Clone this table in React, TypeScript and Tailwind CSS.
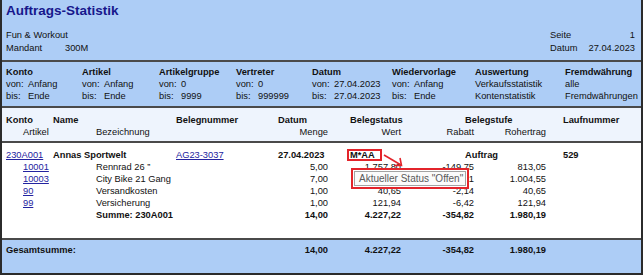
import React from "react";

const BLUE = "bg-[#adcdf6]";

function Sep() {
  return <div className="h-[2px] shrink-0 bg-[#4a4a4a]" />;
}

function FilterCol({ w, title, von, bis, plain }: { w: string; title: string; von: string; bis: string; plain?: boolean }) {
  return (
    <div className={w + " shrink-0"}>
      <div className="font-bold">{title}</div>
      {plain ? (
        <>
          <div>{von}</div>
          <div>{bis}</div>
        </>
      ) : (
        <>
          <div className="flex">
            <span className="w-[22px] shrink-0">von:</span>
            <span>{von}</span>
          </div>
          <div className="flex">
            <span className="w-[22px] shrink-0">bis:</span>
            <span>{bis}</span>
          </div>
        </>
      )}
    </div>
  );
}

function L({ children }: { children: React.ReactNode }) {
  return <span className="text-[#2323a0] underline">{children}</span>;
}

function ItemRow({ art, bez, menge, wert, rabatt, roh }: { art: string; bez: string; menge: string; wert: string; rabatt: string; roh: string }) {
  return (
    <div className="flex h-[12px]">
      <span className="w-[17px] shrink-0" />
      <span className="w-[73px] shrink-0">
        <L>{art}</L>
      </span>
      <span className="w-[182px] shrink-0">{bez}</span>
      <span className="w-[50px] shrink-0 text-right">{menge}</span>
      <span className="w-[73px] shrink-0 text-right">{wert}</span>
      <span className="w-[73px] shrink-0 text-right">{rabatt}</span>
      <span className="w-[72px] shrink-0 text-right">{roh}</span>
    </div>
  );
}

export default function App() {
  return (
    <div className="relative flex h-[275px] w-[643px] flex-col overflow-hidden border-x-2 border-b-2 border-[#2b2b2b] bg-white font-['Liberation_Sans',Arial,sans-serif] text-[9.3px] leading-[12px] text-[#111]">
      {/* Header */}
      <div className={"h-[60px] shrink-0 pl-[4px] pr-[6px] pt-[3px] " + BLUE}>
        <div className="text-[13.5px] font-bold leading-[16px] text-[#17178c]">Auftrags-Statistik</div>
        <div className="mt-[10px] flex justify-between leading-[13px]">
          <div>
            <div>Fun &amp; Workout</div>
            <div className="flex">
              <span className="w-[59px]">Mandant</span>
              <span>300M</span>
            </div>
          </div>
          <div className="w-[85px]">
            <div className="flex justify-between">
              <span>Seite</span>
              <span>1</span>
            </div>
            <div className="flex justify-between">
              <span>Datum</span>
              <span>27.04.2023</span>
            </div>
          </div>
        </div>
      </div>
      <Sep />
      {/* Filter */}
      <div className={"flex h-[44px] shrink-0 pl-[4px] pt-[4px] " + BLUE}>
        <FilterCol w="w-[76px]" title="Konto" von="Anfang" bis="Ende" />
        <FilterCol w="w-[77px]" title="Artikel" von="Anfang" bis="Ende" />
        <FilterCol w="w-[77px]" title="Artikelgruppe" von="0" bis="9999" />
        <FilterCol w="w-[76px]" title="Vertreter" von="0" bis="999999" />
        <FilterCol w="w-[80px]" title="Datum" von="27.04.2023" bis="27.04.2023" />
        <FilterCol w="w-[83px]" title="Wiedervorlage" von="Anfang" bis="Ende" />
        <FilterCol w="w-[90px]" title="Auswertung" von="Verkaufsstatistik" bis="Kontenstatistik" plain />
        <FilterCol w="w-[74px]" title="Fremdwährung" von="alle" bis="Fremdwährungen" plain />
      </div>
      <Sep />
      {/* Column header */}
      <div className="h-[33px] shrink-0 bg-[#eef4fd] pl-[4px] pt-[6px]">
        <div className="flex font-bold">
          <span className="w-[47px] shrink-0">Konto</span>
          <span className="w-[123px] shrink-0">Name</span>
          <span className="w-[102px] shrink-0">Belegnummer</span>
          <span className="w-[72px] shrink-0">Datum</span>
          <span className="w-[115px] shrink-0">Belegstatus</span>
          <span className="w-[98px] shrink-0">Belegstufe</span>
          <span>Laufnummer</span>
        </div>
        <div className="flex">
          <span className="w-[17px] shrink-0" />
          <span className="w-[73px] shrink-0">Artikel</span>
          <span className="w-[182px] shrink-0">Bezeichnung</span>
          <span className="w-[50px] shrink-0 text-right">Menge</span>
          <span className="w-[73px] shrink-0 text-right">Wert</span>
          <span className="w-[73px] shrink-0 text-right">Rabatt</span>
          <span className="w-[72px] shrink-0 text-right">Rohertrag</span>
        </div>
      </div>
      <Sep />
      {/* Data */}
      <div className="h-[95px] shrink-0 bg-white pl-[4px] pt-[6px]">
        <div className="flex h-[12px]">
          <span className="w-[47px] shrink-0">
            <L>230A001</L>
          </span>
          <span className="w-[123px] shrink-0 font-bold">Annas Sportwelt</span>
          <span className="w-[102px] shrink-0">
            <L>AG23-3037</L>
          </span>
          <span className="w-[72px] shrink-0 font-bold">27.04.2023</span>
          <span className="w-[115px] shrink-0 font-bold">M*AA</span>
          <span className="w-[98px] shrink-0 font-bold">Auftrag</span>
          <span className="font-bold">529</span>
        </div>
        <ItemRow art="10001" bez={"Rennrad 26 \u201D"} menge="5,00" wert="1.757,80" rabatt="-149,75" roh="813,05" />
        <ItemRow art="10003" bez="City Bike 21 Gang" menge="7,00" wert="2.306,83" rabatt="-196,51" roh="1.004,55" />
        <ItemRow art="90" bez="Versandkosten" menge="1,00" wert="40,65" rabatt="-2,14" roh="40,65" />
        <ItemRow art="99" bez="Versicherung" menge="1,00" wert="121,94" rabatt="-6,42" roh="121,94" />
        <div className="flex h-[12px] font-bold">
          <span className="w-[90px] shrink-0" />
          <span className="w-[182px] shrink-0">Summe: 230A001</span>
          <span className="w-[50px] shrink-0 text-right">14,00</span>
          <span className="w-[73px] shrink-0 text-right">4.227,22</span>
          <span className="w-[73px] shrink-0 text-right">-354,82</span>
          <span className="w-[72px] shrink-0 text-right">1.980,19</span>
        </div>
      </div>
      <Sep />
      {/* Total */}
      <div className={"flex-1 pl-[4px] pt-[4px] " + BLUE}>
        <div className="flex font-bold">
          <span className="w-[272px] shrink-0">Gesamtsumme:</span>
          <span className="w-[50px] shrink-0 text-right">14,00</span>
          <span className="w-[73px] shrink-0 text-right">4.227,22</span>
          <span className="w-[73px] shrink-0 text-right">-354,82</span>
          <span className="w-[72px] shrink-0 text-right">1.980,19</span>
        </div>
      </div>

      {/* Annotation overlays */}
      <div className="absolute left-[345px] top-[149px] h-[12px] w-[35px] border-2 border-[#e3242b]" />
      <svg className="absolute left-[381px] top-[152px]" width="22" height="16" viewBox="0 0 22 16" fill="none">
        <path d="M1 3 L18 13" stroke="#e3242b" strokeWidth="1.6" />
        <path d="M17 6 L18.5 13.5 L11 13.5" stroke="#e3242b" strokeWidth="1.6" />
      </svg>
      <div className="absolute left-[349px] top-[168px] flex h-[21px] w-[118px] border-2 border-[#e3242b] bg-white p-[1px]">
        <div className="flex flex-1 items-center border border-[#a3a3a3] bg-[#fbfbfb] pl-[4px] text-[10px] text-[#5a5a5a]">
          Aktueller Status "Offen"
        </div>
      </div>
    </div>
  );
}
